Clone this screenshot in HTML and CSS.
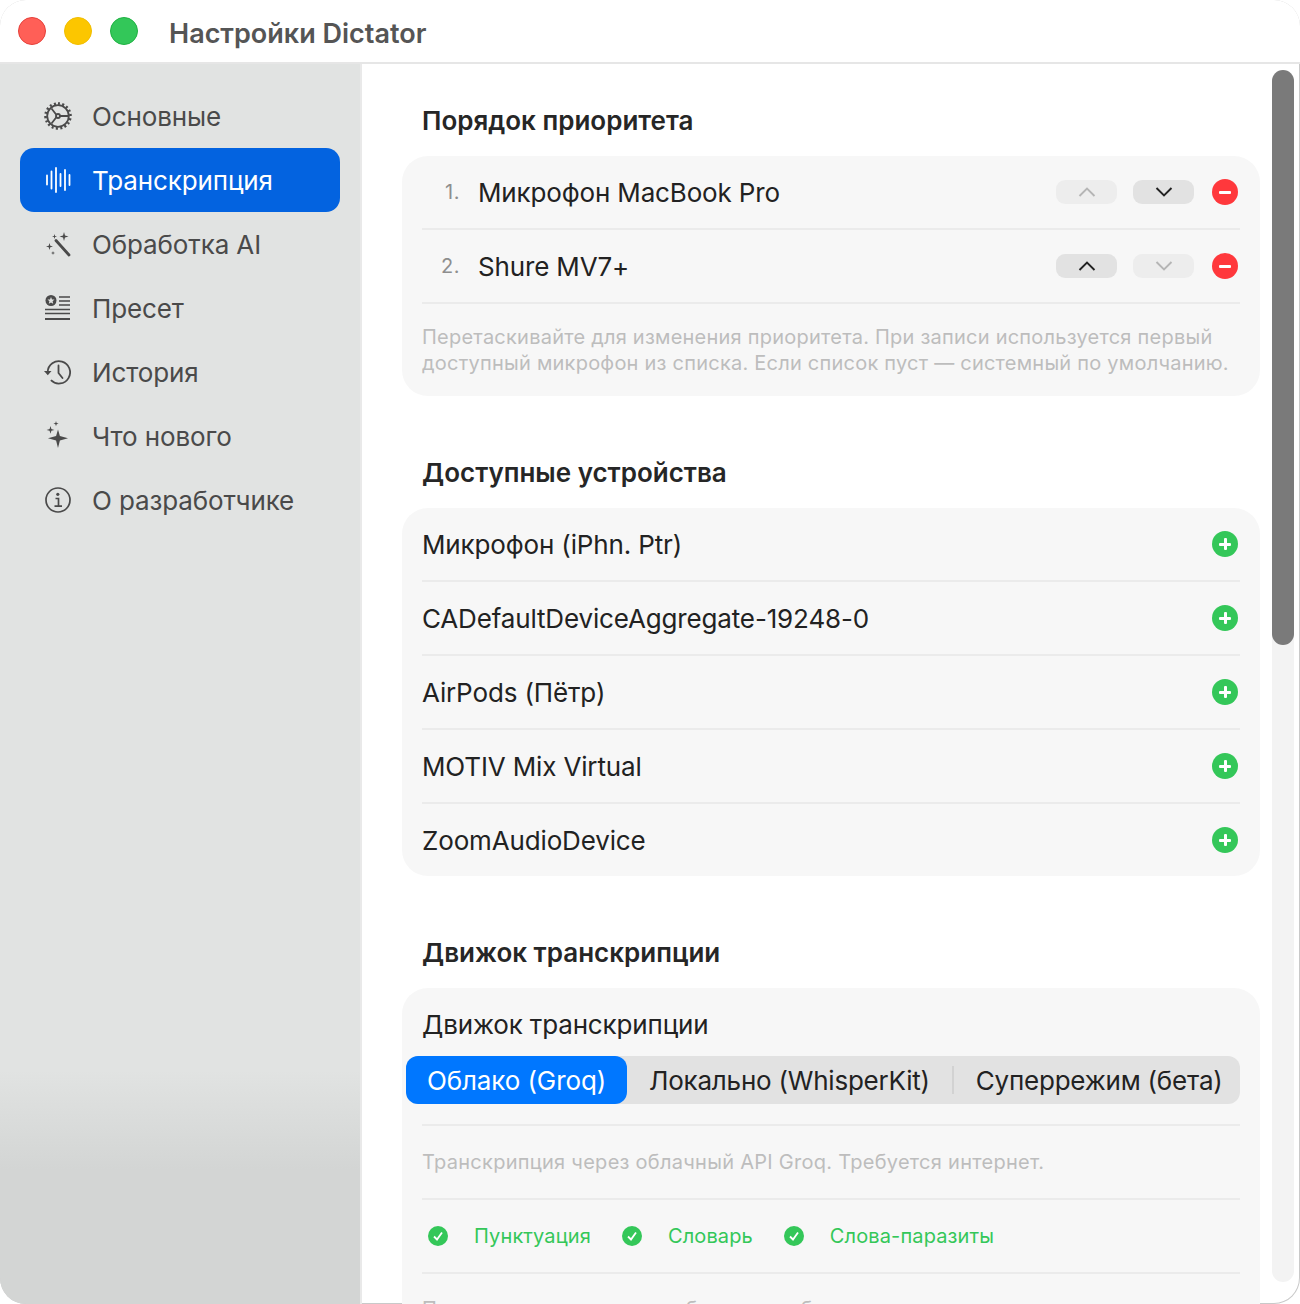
FILE: index.html
```html
<!DOCTYPE html>
<html lang="ru">
<head>
<meta charset="utf-8">
<title>Настройки Dictator</title>
<link rel="stylesheet" href="styles.css">
</head>
<body>
<div class="window">
  <header class="titlebar">
    <span class="light red"></span><span class="light yellow"></span><span class="light green"></span>
    <h1 class="title">Настройки Dictator</h1>
  </header>
  <div class="body">
    <nav class="sidebar">
      <a class="nav-item">
        <svg class="nav-icon" viewBox="0 0 28 28"><g fill="none" stroke="currentColor" stroke-width="1.800"><circle cx="14" cy="14" r="10.800"/><circle cx="14" cy="14" r="2"/><path d="M12.500 13 7.500 6.500M12.500 15 7.500 21.500M16 14h8.500"/><path stroke-width="2.600" stroke-dasharray="2 2.320" d="M14 1.500a12.500 12.500 0 1 1 -.01 0"/></g></svg>
        <span>Основные</span>
      </a>
      <a class="nav-item active">
        <svg class="nav-icon" viewBox="0 0 28 28"><g stroke="currentColor" stroke-width="1.800" stroke-linecap="round"><path d="M3 9.500v9M7.500 5.500v17M12 2v24M16.500 8v12M21 4v20M25.500 9v10"/></g></svg>
        <span>Транскрипция</span>
      </a>
      <a class="nav-item">
        <svg class="nav-icon" viewBox="0 0 28 28"><path d="M12 10.500 25 25" stroke="currentColor" stroke-width="2.800" stroke-linecap="round" fill="none"/><path fill="currentColor" d="M20 2l1 3.500 3.500 1-3.500 1-1 3.500-1-3.500-3.500-1 3.500-1zM5.500 13l.8 2.700 2.700.8-2.700.8-.8 2.700-.8-2.700-2.700-.8 2.700-.8zM10.500 4l.6 1.900 1.900.6-1.900.6-.6 1.900-.6-1.900-1.900-.6 1.900-.6zM9 21l.5 1.500 1.500.5-1.500.5-.5 1.500-.5-1.500-1.500-.5 1.500-.5z"/></svg>
        <span>Обработка AI</span>
      </a>
      <a class="nav-item">
        <svg class="nav-icon" viewBox="0 0 28 28"><circle cx="7" cy="6.500" r="5.500" fill="currentColor"/><path fill="#e1e3e2" d="m7 3 1 2.400 2.500.2-1.900 1.600.6 2.500L7 8.400 4.800 9.700l.6-2.500-1.900-1.600 2.500-.2z"/><g fill="none" stroke="currentColor" stroke-width="1.500"><path d="M15 3h11M15 7h11M15 11h11"/></g><path fill="none" stroke="currentColor" stroke-width="1.700" d="M1 15.500h25M1 19.500h25"/><path fill="none" stroke="currentColor" stroke-width="2" d="M1 25h25"/></svg>
        <span>Пресет</span>
      </a>
      <a class="nav-item">
        <svg class="nav-icon" viewBox="0 0 28 28"><g fill="none" stroke="currentColor" stroke-width="1.800"><path d="M3.700 14a11.200 11.200 0 1 1 3.200 8.200"/><path d="M14.500 7.500v7.500l4 5" stroke-linecap="round"/></g><path fill="currentColor" d="M0 13h7.500l-3.700 4.300z"/></svg>
        <span>История</span>
      </a>
      <a class="nav-item">
        <svg class="nav-icon" viewBox="0 0 28 28"><path fill="currentColor" d="M14 7.500l1.900 6.500 8.100 2.300-8.100 2.300-1.900 7.400-1.900-7.400-8.100-2.300 8.100-2.300zM6.500 4l.9 3 3 .9-3 .9-.9 3-.9-3-3-.9 3-.9zM12 -1l.6 2 2 .6-2 .6-.6 2-.6-2-2-.6 2-.6z"/></svg>
        <span>Что нового</span>
      </a>
      <a class="nav-item">
        <svg class="nav-icon" viewBox="0 0 28 28"><circle cx="14" cy="14" r="12" fill="none" stroke="currentColor" stroke-width="1.700"/><path fill="none" stroke="currentColor" stroke-width="1.700" d="M11.500 12.500h3v7.500M10.500 20.200h7.500"/><circle cx="13.800" cy="8.300" r="1.600" fill="currentColor"/></svg>
        <span>О разработчике</span>
      </a>
    </nav>
    <main class="content">
      <section class="section first">
        <h2 class="section-title">Порядок приоритета</h2>
        <div class="card">
          <div class="row priority">
            <span class="index">1.</span><span class="label grow">Микрофон MacBook Pro</span>
            <button class="step off"><svg viewBox="0 0 18 12"><path d="M1.500 10 9 2.500l7.500 7.500"/></svg></button>
            <button class="step"><svg viewBox="0 0 18 12"><path d="M1.500 2 9 9.500 16.500 2"/></svg></button>
            <span class="round minus"></span>
          </div>
          <div class="row priority">
            <span class="index">2.</span><span class="label grow">Shure MV7+</span>
            <button class="step"><svg viewBox="0 0 18 12"><path d="M1.500 10 9 2.500l7.500 7.500"/></svg></button>
            <button class="step off"><svg viewBox="0 0 18 12"><path d="M1.500 2 9 9.500 16.500 2"/></svg></button>
            <span class="round minus"></span>
          </div>
          <p class="note tall">Перетаскивайте для изменения приоритета. При записи используется первый доступный микрофон из списка. Если список пуст — системный по умолчанию.</p>
        </div>
      </section>
      <section class="section">
        <h2 class="section-title">Доступные устройства</h2>
        <div class="card">
          <div class="row device"><span class="label grow">Микрофон (iPhn. Ptr)</span><span class="round plus"></span></div>
          <div class="row device"><span class="label grow">CADefaultDeviceAggregate-19248-0</span><span class="round plus"></span></div>
          <div class="row device"><span class="label grow">AirPods (Пётр)</span><span class="round plus"></span></div>
          <div class="row device"><span class="label grow">MOTIV Mix Virtual</span><span class="round plus"></span></div>
          <div class="row device last"><span class="label grow">ZoomAudioDevice</span><span class="round plus"></span></div>
        </div>
      </section>
      <section class="section">
        <h2 class="section-title">Движок транскрипции</h2>
        <div class="card engine">
          <div class="engine-head">
            <span class="label">Движок транскрипции</span>
            <div class="segmented">
              <span class="seg selected">Облако (Groq)</span>
              <span class="seg">Локально (WhisperKit)</span>
              <i class="seg-divider"></i>
              <span class="seg">Суперрежим (бета)</span>
            </div>
          </div>
          <p class="note single">Транскрипция через облачный API Groq. Требуется интернет.</p>
          <div class="features">
            <svg class="check" viewBox="0 0 20 20"><circle cx="10" cy="10" r="10"/><path d="M6 10.500l3 3 5-7"/></svg><span class="feature">Пунктуация</span>
            <svg class="check" viewBox="0 0 20 20"><circle cx="10" cy="10" r="10"/><path d="M6 10.500l3 3 5-7"/></svg><span class="feature">Словарь</span>
            <svg class="check" viewBox="0 0 20 20"><circle cx="10" cy="10" r="10"/><path d="M6 10.500l3 3 5-7"/></svg><span class="feature">Слова-паразиты</span>
          </div>
          <p class="note cut">Подключите ключ к нему быстрее, и без задержки</p>
        </div>
      </section>
    </main>
    <div class="scrollbar"><div class="thumb"></div></div>
  </div>
</div>
</body>
</html>
```

FILE: styles.css
```css
* { box-sizing: border-box; }
html, body { margin: 0; height: 1304px; background: #fff; overflow: hidden; }
body { font-family: Inter, "Noto Sans", sans-serif; color: #222; }
.window { width: 1300px; height: 1304px; display: flex; flex-direction: column; overflow: hidden; border-radius: 26px; box-shadow: inset 0 0 0 1px #c9c9c9; position: relative; }
.titlebar { height: 64px; flex: none; display: flex; align-items: center; padding: 0 0 0 18px; background: #fff; border-bottom: 2px solid #e6e6e6; }
.light { width: 28px; height: 28px; border-radius: 50%; margin-right: 18px; border: 1px solid rgba(0,0,0,.1); }
.light.red { background: #ff5f57; border-color: #e5403a; }
.light.yellow { background: #fcc600; border-color: #f0bd00; }
.light.green { background: #33c759; border-color: #1fb143; }
.title { margin: 5px 0 0 13px; font-size: 27px; line-height: 32px; font-weight: 600; color: #555; }
.body { flex: 1; display: flex; min-height: 0; position: relative; }
.sidebar { width: 362px; flex: none; padding: 20px 20px 0 20px; border-right: 2px solid #e9e9e9; background: linear-gradient(#e1e3e2 0, #e1e3e2 1006px, #d3d5d4 1106px, #d3d5d4 100%); display: flex; flex-direction: column; }
.nav-item { height: 64px; display: flex; align-items: center; gap: 20px; padding-left: 24px; border-radius: 14px; font-size: 26px; letter-spacing: -.12px; color: #4a4a4a; }
.nav-item.active { background: #0363e0; color: #fff; }
.nav-icon { width: 28px; height: 28px; flex: none; overflow: visible; }
.content { width: 910px; flex: none; padding: 0 40px; overflow: hidden; }
.section { padding-top: 61px; }
.section.first { padding-top: 41px; }
.section-title { margin: 0 0 19px 20px; font-size: 26px; line-height: 32px; font-weight: 600; letter-spacing: 0; color: #262626; }
.card { background: #f7f7f7; border-radius: 26px; padding: 0 20px; width: 858px; }
.row { display: flex; align-items: center; border-bottom: 2px solid #ebebeb; }
.row.priority { height: 74px; }
.row.device { height: 74px; }
.row.device.last { border-bottom: 0; height: 72px; }
.index { width: 38px; margin-right: 18px; text-align: right; font-size: 20px; letter-spacing: .5px; color: #8e8e8e; }
.label { font-size: 26px; line-height: 32px; letter-spacing: -.15px; color: #222; }
.row .label { padding-top: 2px; }
.grow { flex: 1; }
.step { width: 61px; height: 24px; border: 0; border-radius: 9px; background: #e2e2e2; margin: 0 16px 0 0; padding: 0; display: flex; align-items: center; justify-content: center; }
.step svg { width: 18px; height: 12px; fill: none; stroke: #222; stroke-width: 1.900; }
.step.off { background: #ededed; }
.step.off svg { stroke: #b5b5b5; }
.round { width: 26px; height: 26px; border-radius: 50%; flex: none; margin-right: 2px; position: relative; }
.minus { background: #ff383c; margin-left: 2px; }
.plus { background: #34c759; }
.round::before { content: ""; position: absolute; left: 7px; top: 11.500px; width: 12px; height: 3px; border-radius: 1px; background: #fff; }
.plus::after { content: ""; position: absolute; left: 11.500px; top: 7px; width: 3px; height: 12px; border-radius: 1px; background: #fff; }
.note { margin: 0; font-size: 20px; line-height: 26px; color: #bdbdbd; }
.note.tall { padding: 20px 0; letter-spacing: .23px; }
.engine { height: 400px; overflow: hidden; }
.engine-head { padding-top: 21px; border-bottom: 2px solid #ebebeb; height: 138px; }
.engine-head .label { display: block; }
.segmented { display: flex; align-items: center; height: 48px; margin: 15px 0 0 -16px; width: 834px; background: #e2e2e2; border-radius: 12px; }
.seg { font-size: 26px; line-height: 32px; padding: 2px 22px 0; letter-spacing: -.22px; color: #222; white-space: nowrap; }
.seg.selected { background: #0077ff; color: #fff; height: 48px; line-height: 46px; border-radius: 12px; width: 221px; flex: none; text-align: center; padding: 2px 0 0; letter-spacing: -.1px; }
.seg-divider { width: 2px; height: 28px; background: #d2d2d2; flex: none; }
.note.single { height: 74px; display: flex; align-items: center; letter-spacing: .27px; border-bottom: 2px solid #ebebeb; }
.features { height: 74px; display: flex; align-items: center; padding-left: 6px; border-bottom: 2px solid #ebebeb; }
.check { width: 20px; height: 20px; flex: none; margin-right: 26px; }
.check circle { fill: #34c759; }
.check path { fill: none; stroke: #fff; stroke-width: 1.800; }
.feature { font-size: 20px; line-height: 26px; letter-spacing: .12px; color: #34c759; margin-right: 31px; }
.note.cut { padding-top: 22px; letter-spacing: .27px; white-space: nowrap; }
.scrollbar { position: absolute; left: 1272px; top: 6px; width: 22px; height: 1212px; border-radius: 11px; background: #f3f3f3; }
.thumb { width: 100%; height: 575px; border-radius: 11px; background: #7a7a7a; }
```
